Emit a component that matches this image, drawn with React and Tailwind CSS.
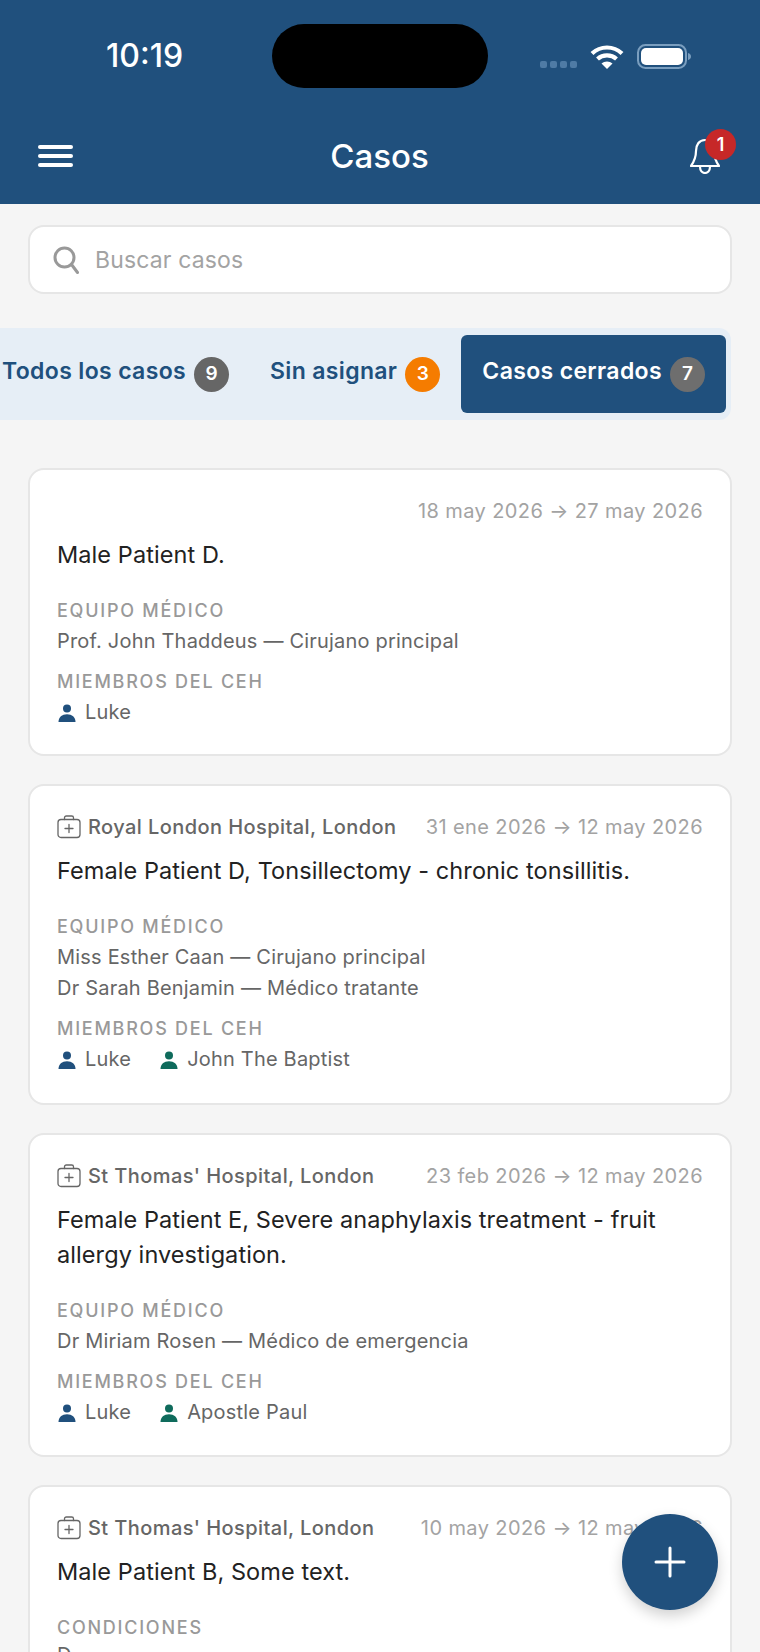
import React from "react";

const Person = ({ cls }) => (
  <svg viewBox="0 0 18 18" className={"w-[18px] h-[18px] shrink-0 " + cls} fill="currentColor">
    <circle cx="9" cy="4.6" r="4" />
    <path d="M0.5 18 C0.5 13 4 10.2 9 10.2 C14 10.2 17.5 13 17.5 18 Z" />
  </svg>
);

const Hospital = () => (
  <svg viewBox="0 0 24 24" className="w-[24px] h-[24px] shrink-0 text-[#666]" fill="none" stroke="currentColor" strokeWidth="1.3" strokeLinecap="round" strokeLinejoin="round">
    <rect x="1" y="4.5" width="22" height="18" rx="3" />
    <path d="M7.5 4.5V2.8C7.5 1.8 8.3 1 9.3 1h5.4c1 0 1.8.8 1.8 1.8v1.7" />
    <path d="M12 9.5v8M8 13.5h8" />
  </svg>
);

const Label = ({ children }) => (
  <div className="text-[18px] leading-[24px] font-medium tracking-[1.75px] text-[#999]">{children}</div>
);

const Line = ({ children }) => (
  <div className="text-[20px] leading-[31px] tracking-[0.2px] text-[#666]">{children}</div>
);

const Card = ({ hospital, dates, title, team, members, extra, className }) => (
  <div className={"mx-[28px] rounded-[16px] border-2 border-[#e6e6e6] bg-white px-[27px] pt-[29px] " + className}>
    <div className="flex items-center justify-between h-[24px]">
      <div className="flex items-center gap-[7px]">
        {hospital && <Hospital />}
        {hospital && <span className="text-[20px] font-medium tracking-[0.42px] text-[#666] leading-[24px]">{hospital}</span>}
      </div>
      <span className="text-[20px] tracking-[0.4px] text-[#a3a3a3] leading-[24px]">{dates}</span>
    </div>
    <div className="mt-[14px] text-[23.5px] leading-[35px] tracking-[0.08px] text-[#222]">{title}</div>
    {extra ? (
      <div className="mt-[27px]">
        <Label>{extra}</Label>
        <Line>D</Line>
      </div>
    ) : (
      <>
        <div className="mt-[27px]">
          <Label>EQUIPO MÉDICO</Label>
          <div className="mt-[3px]">{team.map((t) => <Line key={t}>{t}</Line>)}</div>
        </div>
        <div className="mt-[13px]">
          <Label>MIEMBROS DEL CEH</Label>
          <div className="mt-[3px] ml-[1px] flex items-center gap-[29px]">
            {members.map((m) => (
              <div key={m.n} className="flex items-center gap-[9px]">
                <Person cls={m.c} />
                <Line>{m.n}</Line>
              </div>
            ))}
          </div>
        </div>
      </>
    )}
  </div>
);

const Tab = ({ label, count, badge, active }) => (
  <div className={"flex items-center gap-[8px] h-[78px] rounded-[6px] " + (active ? "bg-[#20507d] w-[265px] pl-[21px]" : "")}>
    <span className={"text-[23px] font-semibold tracking-[0.35px] leading-[30px] relative -top-[3px] " + (active ? "text-white" : "text-[#20507d]")}>{label}</span>
    <span className={"w-[35px] h-[35px] rounded-full flex items-center justify-center text-white text-[19px] font-semibold " + badge}>{count}</span>
  </div>
);

export default function App() {
  const blue = "text-[#20507d]";
  const green = "text-[#0f6b5c]";
  return (
    <div className="relative w-[760px] h-[1652px] overflow-hidden bg-[#f5f5f5] font-['Inter',sans-serif]">
      <header className="h-[204px] bg-[#20507d] text-white">
        <div className="flex items-center h-[64px] pt-[24px] box-content">
          <span className="ml-[106px] w-[166px] text-[32px] font-medium leading-[66px]">10:19</span>
          <div className="w-[216px] h-[64px] rounded-[32px] bg-black" />
          <div className="ml-[52px] flex items-center h-[64px]">
            <div className="flex gap-[3px] mt-[17px]">
              {[0, 1, 2, 3].map((i) => (
                <span key={i} className="w-[7px] h-[7px] rounded-[2px] bg-[#4f7ba5]" />
              ))}
            </div>
            <svg viewBox="0 0 34 25" className="w-[34px] h-[25px] ml-[13px]" fill="none" stroke="white" strokeWidth="4.2">
              <path d="M2 9.5C10.5 1.500 23.500 1.500 32 9.500" />
              <path d="M7.500 15C12.800 10.200 21.200 10.200 26.500 15" />
              <path d="M17 25l-5.500-5.500c3-2.800 8-2.800 11 0z" fill="white" stroke="none" />
            </svg>
            <svg viewBox="0 0 54 25" className="w-[54px] h-[25px] ml-[13px]" fill="none">
              <rect x="1" y="1" width="48" height="23" rx="7.500" stroke="#7a9ebf" strokeWidth="2" />
              <rect x="4" y="4" width="42" height="17" rx="5" fill="white" />
              <path d="M51 9c1.800.4 3 1.800 3 3.500s-1.200 3.100-3 3.500z" fill="#7a9ebf" />
            </svg>
          </div>
        </div>
        <div className="flex items-center justify-between h-[68px] mt-[34px] pl-[38px] pr-[40px]">
          <div className="flex flex-col gap-[5px] w-[35px]">
            <span className="h-[4px] rounded-full bg-white" />
            <span className="h-[4px] rounded-full bg-white" />
            <span className="h-[4px] rounded-full bg-white" />
          </div>
          <span className="mr-[4px] text-[33px] font-medium leading-[40px]">Casos</span>
          <div className="relative w-[30px] h-[36px]">
            <svg viewBox="0 0 30 36" className="w-[30px] h-[36px]" fill="none" stroke="white" strokeWidth="2.2" strokeLinejoin="round" strokeLinecap="round">
              <path d="M15 2C9 2 6 7 6 13c0 6-1.500 10-5 15h28c-3.500-5-5-9-5-15 0-6-3-11-9-11z" />
              <path d="M10 28.500c0 4 2.200 6.500 5 6.500s5-2.500 5-6.500" />
            </svg>
            <div className="absolute -top-[9px] left-[15px] w-[31px] h-[31px] rounded-full bg-[#c62828] flex items-center justify-center text-[18px] font-semibold">1</div>
          </div>
        </div>
      </header>

      <div className="mx-[28px] mt-[21px] h-[69px] rounded-[16px] border-2 border-[#e6e6e6] bg-white flex items-center pl-[23px]">
        <svg viewBox="0 0 26 28" className="w-[26px] h-[28px] text-[#999]" fill="none" stroke="currentColor" strokeWidth="3" strokeLinecap="round">
          <circle cx="11.500" cy="11.500" r="9.500" />
          <path d="M18.500 18.500l6 8" />
        </svg>
        <span className="ml-[16px] text-[23px] tracking-[0.15px] text-[#a3a3a3] leading-[30px]">Buscar casos</span>
      </div>

      <div className="mt-[34px] w-[731px] h-[92px] rounded-r-[12px] bg-[#e6eef6] flex items-center pl-[2px]">
        <Tab label="Todos los casos" count="9" badge="bg-[#666]" />
        <div className="w-[41px]" />
        <Tab label="Sin asignar" count="3" badge="bg-[#f57c00]" />
        <div className="w-[21px]" />
        <Tab label="Casos cerrados" count="7" badge="bg-[#6e6e6e]" active />
      </div>

      <div className="mt-[48px] flex flex-col gap-[28px]">
        <Card dates="18 may 2026 → 27 may 2026" title="Male Patient D." team={["Prof. John Thaddeus — Cirujano principal"]} members={[{ n: "Luke", c: blue }]} className="h-[288px]" />
        <Card hospital="Royal London Hospital, London" dates="31 ene 2026 → 12 may 2026" title="Female Patient D, Tonsillectomy - chronic tonsillitis." team={["Miss Esther Caan — Cirujano principal", "Dr Sarah Benjamin — Médico tratante"]} members={[{ n: "Luke", c: blue }, { n: "John The Baptist", c: green }]} className="h-[321px]" />
        <Card hospital="St Thomas' Hospital, London" dates="23 feb 2026 → 12 may 2026" title="Female Patient E, Severe anaphylaxis treatment - fruit allergy investigation." team={["Dr Miriam Rosen — Médico de emergencia"]} members={[{ n: "Luke", c: blue }, { n: "Apostle Paul", c: green }]} className="h-[324px]" />
        <Card hospital="St Thomas' Hospital, London" dates="10 may 2026 → 12 may 2026" title="Male Patient B, Some text." extra="CONDICIONES" className="h-[300px]" />
      </div>

      <div className="absolute left-[622px] top-[1514px] w-[96px] h-[96px] rounded-full bg-[#20507d] shadow-[0_6px_14px_rgba(0,0,0,0.18)] flex items-center justify-center">
        <svg viewBox="0 0 32 32" className="w-[32px] h-[32px]" stroke="white" strokeWidth="3" strokeLinecap="round">
          <path d="M16 2v28M2 16h28" />
        </svg>
      </div>
    </div>
  );
}
